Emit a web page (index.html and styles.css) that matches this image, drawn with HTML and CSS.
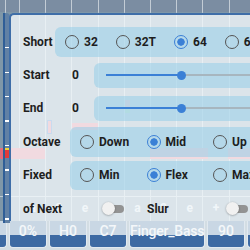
FILE: index.html
```html
<!DOCTYPE html>
<html lang="en">
<head>
    <meta charset="UTF-8">
    <title>Note settings</title>
    <link rel="stylesheet" href="styles.css">
</head>
<body>
<div class="stage">
    <div class="roll">
        <div class="topbar"></div>
        <div class="grid">
            <div class="note" style="left:-2px;top:136px;width:47px"></div>
            <div class="note" style="left:150px;top:136px;width:58px"></div>
            <div class="note" style="left:228px;top:136px;width:40px"></div>
            <div class="note" style="left:72px;top:111px;width:26px;height:7px"></div>
            <div class="note sel" style="left:47px;top:108px;width:5px;height:14px"></div>
            <div class="note mini" style="left:125px;top:88px;width:5px;height:13px"></div>
        </div>
        <div class="beats">
            <span>a</span><span>2</span><span>e</span><span>+</span><span>a</span><span>2</span><span>e</span><span>+</span><span>a</span>
        </div>
        <div class="tiles">
            <div class="tile"></div>
            <div class="tile">0%</div>
            <div class="tile">H0</div>
            <div class="tile">C7</div>
            <div class="tile wide">Finger_Bass</div>
            <div class="tile">90</div>
            <div class="tile"></div>
        </div>
    </div>

    <div class="side">
        <div class="marker"></div>
    </div>

    <div class="dialog">
        <div class="row">
            <span class="label w-short">Short</span>
            <div class="box radios">
                <label class="radio"><i></i>32</label>
                <label class="radio"><i></i>32T</label>
                <label class="radio on"><i></i>64</label>
                <label class="radio"><i></i>64T</label>
            </div>
        </div>
        <div class="row">
            <span class="label w-value">Start</span>
            <span class="value">0</span>
            <div class="box slider">
                <div class="track"><div class="fill"></div></div>
            </div>
        </div>
        <div class="row">
            <span class="label w-value">End</span>
            <span class="value">0</span>
            <div class="box slider">
                <div class="track"><div class="fill"></div></div>
            </div>
        </div>
        <div class="row">
            <span class="label w-group">Octave</span>
            <div class="box radios even">
                <label class="radio"><i></i>Down</label>
                <label class="radio on"><i></i>Mid</label>
                <label class="radio"><i></i>Up</label>
            </div>
        </div>
        <div class="row">
            <span class="label w-group">Fixed</span>
            <div class="box radios even short-box">
                <label class="radio"><i></i>Min</label>
                <label class="radio on"><i></i>Flex</label>
                <label class="radio"><i></i>Max</label>
            </div>
        </div>
        <div class="row">
            <span class="label w-toggle">of Next</span>
            <span class="toggle"><b></b></span>
            <span class="label slur">Slur</span>
            <span class="toggle"><b></b></span>
        </div>
    </div>
</div>
</body>
</html>
```

FILE: styles.css
```css
* {
    padding: 0;
    margin: 0;
    box-sizing: border-box;
}

body {
    width: 250px;
    height: 250px;
    overflow: hidden;
    font-family: Roboto, "Liberation Sans", sans-serif;
}

.stage {
    width: 250px;
    height: 250px;
    position: relative;
    overflow: hidden;
    background: #d3dde3;
}

/* piano roll behind the dialog */
.roll {
    height: 250px;
    display: flex;
    flex-direction: column;
}

.topbar {
    height: 12px;
    flex: none;
    background: #7b8da2 repeating-linear-gradient(90deg, rgba(255,255,255,.55) 0 1px, transparent 1px 26.2px);
    background-position: 19px 0;
}

.grid {
    flex: 1;
    position: relative;
    background: #7f97a8 repeating-linear-gradient(90deg, rgba(255,255,255,.45) 0 1px, transparent 1px 26.2px);
    background-position: 19px 0;
}

.note {
    position: absolute;
    height: 11px;
    background: #e46a7a;
}

.note.sel {
    border: 1px solid #2f6fc0;
}

.note.mini {
    background: linear-gradient(#e46a7a 60%, #6bbf6b 60%);
}

.beats {
    height: 25px;
    flex: none;
    display: flex;
    padding-left: 19px;
    border-top: 1px solid rgba(255,255,255,.5);
    background: #7f97a8;
}

.beats span {
    width: 26.2px;
    flex: none;
    border-left: 1px solid rgba(255,255,255,.45);
    text-align: center;
    color: rgba(255,255,255,.8);
    font-size: 12px;
    font-weight: 700;
    line-height: 22px;
}

.tiles {
    height: 29px;
    flex: none;
    display: flex;
    gap: 2px;
    margin-left: -31px;
    padding-bottom: 2px;
    background: #d3dde3;
}

.tile {
    width: 38px;
    flex: none;
    background: linear-gradient(#c9d7e4 0 14px, #3d6aa3 14px);
    border: 1px solid #e1e9f0;
    border-top: 0;
    border-radius: 0 0 4px 4px;
    color: #f4f7fa;
    font-size: 14px;
    font-weight: 500;
    line-height: 14px;
    padding-top: 3px;
    text-align: center;
    white-space: nowrap;
}

.tile.wide {
    width: 76px;
    letter-spacing: -0.2px;
}

/* left keyboard strip */
.side {
    position: absolute;
    z-index: 1;
    left: 3px;
    top: 13px;
    width: 7px;
    height: 210px;
    background: #6181a5 repeating-linear-gradient(180deg, transparent 0 23px, #fff 23px 24.5px);
    background-position: 0 11px;
    border-left: 2px solid #2f5e97;
    border-top-right-radius: 4px;
}

.marker {
    position: absolute;
    left: 0;
    top: 135px;
    width: 4px;
    height: 10px;
    background: #e23a3a;
    border-top: 2px solid #f2d23a;
}

/* dialog */
.dialog {
    position: absolute;
    z-index: 2;
    left: 9px;
    top: 13px;
    width: 270px;
    height: 208px;
    background: rgba(245,250,252,.78);
    border-top: 2px solid #3f6ea8;
    border-left: 2px solid #3f6ea8;
    border-top-left-radius: 5px;
    padding: 10px 0 0 12px;
}

.row {
    height: 33.4px;
    display: flex;
    align-items: center;
}

.label,
.value {
    flex: none;
    font-size: 12px;
    font-weight: 700;
    color: #1e1e1e;
}

.w-short { width: 32px; }
.w-value { width: 49px; }
.w-group { width: 47px; }
.w-toggle { width: 79px; }
.value { width: 22px; }

.box {
    flex: 1;
    background: rgba(150,205,232,.55);
    border-radius: 6px;
}

.radios {
    height: 30px;
    display: flex;
    align-items: center;
    padding-left: 10px;
}

.radios.short-box {
    height: 29px;
}

.radio {
    display: flex;
    align-items: center;
    flex: none;
    margin-right: 18px;
    font-size: 12px;
    font-weight: 700;
    color: #1e1e1e;
}

.even .radio {
    width: 66.5px;
    margin-right: 0;
}

.radio i {
    width: 14px;
    height: 14px;
    border: 1.7px solid #555;
    border-radius: 50%;
    margin-right: 5px;
}

.radio.on i {
    border-color: #3b80d6;
    background: radial-gradient(circle, #3b80d6 0 3.4px, transparent 4px);
}

.slider {
    height: 25px;
    display: flex;
    align-items: center;
    padding-left: 12px;
}

.track {
    flex: 1;
    height: 2px;
    background: #a7b6bf;
    position: relative;
}

.fill {
    width: 75px;
    height: 2px;
    background: #3b80d6;
    position: relative;
}

.fill::after {
    content: "";
    position: absolute;
    right: -4.5px;
    top: -3.5px;
    width: 9px;
    height: 9px;
    border-radius: 50%;
    background: #3b80d6;
}

.toggle {
    flex: none;
    width: 22px;
    height: 14px;
    position: relative;
    display: flex;
    align-items: center;
}

.toggle::before {
    content: "";
    margin-left: 2px;
    width: 20px;
    height: 8px;
    border-radius: 4px;
    background: #939393;
}

.toggle b {
    position: absolute;
    left: 0;
    top: 0;
    width: 13px;
    height: 13px;
    border-radius: 50%;
    background: #f1f1f1;
    box-shadow: 0 0.5px 2px rgba(0,0,0,.35);
}

.slur {
    margin-left: 23px;
    width: 79px;
}
```
